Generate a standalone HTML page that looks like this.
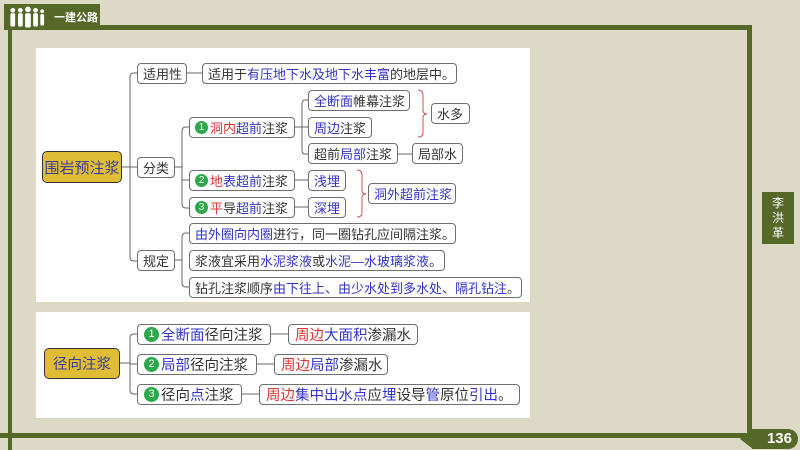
<!DOCTYPE html>
<html><head><meta charset="utf-8"><style>
*{margin:0;padding:0;box-sizing:border-box}
body{width:800px;height:450px;background:#dcd9c7;position:relative;overflow:hidden;font-family:"Liberation Sans","Noto Sans CJK SC",sans-serif}
.g{position:absolute;background:#566828}
.panel{position:absolute;background:#fff}
.n{position:absolute;border:1px solid #6f6f6f;border-radius:4px;background:#fff;font-size:13px;color:#333;display:flex;align-items:center;padding:0 5px;white-space:nowrap;letter-spacing:0}
.p2 .n{font-size:14.5px;padding:0 6px}
.root{background:#e0bd35;border:1.5px solid #333;border-radius:5px;color:#3b3c9a;font-size:15px;justify-content:center}
.b{color:#3333cc}.r{color:#e03333}
.c{display:inline-block;width:13px;height:13px;border-radius:50%;background:#2aa84a;color:#fff;font-size:10px;line-height:13px;text-align:center;margin-right:2px}
.p2 .c{width:15px;height:15px;line-height:15px;font-size:11px}
svg{position:absolute;left:0;top:0}
</style></head><body>
<div class="g" style="left:100px;top:25px;width:652px;height:5px"></div>
<div class="g" style="left:747px;top:25px;width:5px;height:412px"></div>
<div class="g" style="left:0;top:433px;width:752px;height:5px"></div>
<div class="g" style="left:8px;top:30px;width:4px;height:420px"></div>
<div class="g" style="left:4px;top:4px;width:96px;height:26px;display:flex;align-items:center;padding-left:4px;white-space:nowrap">
<svg width="38" height="22" viewBox="0 0 40 22" style="position:static;flex:none"><g fill="#fff"><circle cx="5" cy="4" r="2.5"/><rect x="2.5" y="7" width="5" height="14" rx="1.5"/><circle cx="13" cy="4" r="2.5"/><rect x="10.5" y="7" width="5" height="14" rx="1.5"/><circle cx="21" cy="3" r="3"/><rect x="18" y="7" width="6" height="15" rx="1.5"/><circle cx="29" cy="4" r="2.5"/><rect x="26.5" y="7" width="5" height="14" rx="1.5"/><circle cx="36" cy="5" r="2"/><rect x="34" y="8" width="4" height="12" rx="1.5"/></g></svg>
<span style="color:#fff;font-size:11px;margin-left:8px;font-weight:bold;white-space:nowrap">一建公路</span></div>
<div class="g" style="left:762px;top:192px;width:32px;height:52px;color:#fff;font-size:12px;line-height:15px;text-align:center;padding-top:4px">李<br>洪<br>革</div>
<div class="g" style="left:752px;top:429px;width:46px;height:20px;border-radius:0 10px 10px 0;color:#fff;font-size:15px;font-weight:bold;text-align:right;padding-right:6px;line-height:20px">136</div>
<div class="g" style="left:740px;top:429px;width:13px;height:20px;clip-path:polygon(100% 0,100% 100%,0 50%)"></div>

<div class="panel" style="left:36px;top:48px;width:494px;height:254px"></div>
<div class="panel" style="left:36px;top:312px;width:494px;height:106px"></div>

<svg width="800" height="450" fill="none" stroke="#666" stroke-width="1">
<path d="M122 167H130M137 73H134Q130 73 130 77V257Q130 261 134 261H137M130 167H137"/>
<path d="M187 73H202"/>
<path d="M175 167H182M189 127H186Q182 127 182 131V204Q182 208 186 208H189M182 180H189"/>
<path d="M295 127H302M308 100H305Q302 100 302 104V150Q302 154 305 154H308M302 127H308"/>
<path d="M398 154H412"/>
<path d="M295 180H308M295 207H308"/>
<path d="M175 260H182M189 233H186Q182 233 182 237V283Q182 287 186 287H189"/>
<path d="M120 363H130M137 334H134Q130 334 130 338V390Q130 394 134 394H137M130 364H137"/>
<path d="M271 334H288M257 364H274M242 394H259"/>
<path stroke="#d05050" d="M418 90Q423 90 423 95V110Q423 114 427 114Q423 114 423 118V133Q423 137 418 137"/>
<path stroke="#d05050" d="M357 170Q362 170 362 175V190Q362 194 366 194Q362 194 362 198V213Q362 217 357 217"/>
</svg>

<div class="n root" style="left:42px;top:151px;width:80px;height:32px">围岩预注浆</div>
<div class="n" style="left:137px;top:63px;height:21px;width:50px">适用性</div>
<div class="n" style="left:137px;top:157px;height:21px;width:38px">分类</div>
<div class="n" style="left:137px;top:250px;height:21px;width:38px">规定</div>
<div class="n" style="left:202px;top:63px;height:21px;width:255px">适用于<span class="b">有压地下水及地下水丰富</span>的地层中。</div>
<div class="n" style="left:189px;top:117px;height:21px;width:106px"><span class="c">1</span><span class="r">洞内</span><span class="b">超前</span>注浆</div>
<div class="n" style="left:189px;top:170px;height:21px;width:106px"><span class="c">2</span><span class="r">地</span><span class="b">表超前</span>注浆</div>
<div class="n" style="left:189px;top:197px;height:21px;width:106px"><span class="c">3</span><span class="r">平</span>导<span class="b">超前</span>注浆</div>
<div class="n" style="left:308px;top:90px;height:21px;width:102px"><span class="b">全断面</span>帷幕注浆</div>
<div class="n" style="left:308px;top:117px;height:21px;width:64px"><span class="b">周边</span>注浆</div>
<div class="n" style="left:308px;top:143px;height:21px;width:90px">超前<span class="b">局部</span>注浆</div>
<div class="n" style="left:412px;top:143px;height:21px;width:51px">局部水</div>
<div class="n" style="left:431px;top:103px;height:21px;width:39px">水多</div>
<div class="n" style="left:308px;top:170px;height:21px;width:38px"><span class="b">浅埋</span></div>
<div class="n" style="left:308px;top:197px;height:21px;width:38px"><span class="b">深埋</span></div>
<div class="n" style="left:368px;top:183px;height:21px;width:88px"><span class="b">洞外超前注浆</span></div>
<div class="n" style="left:189px;top:223px;height:21px;width:267px"><span class="b">由外圈向内圈</span>进行，同一圈钻孔应间隔注浆。</div>
<div class="n" style="left:189px;top:250px;height:21px;width:256px">浆液宜采用<span class="b">水泥浆液</span>或<span class="b">水泥—水玻璃浆液</span>。</div>
<div class="n" style="left:189px;top:277px;height:21px;width:333px">钻孔注浆顺序<span class="b">由下往上、由少水处到多水处、隔孔钻注</span>。</div>

<div class="p2">
<div class="n root" style="left:44px;top:348px;width:76px;height:31px;padding:0">径向注浆</div>
<div class="n" style="left:137px;top:324px;height:21px;width:134px"><span class="c">1</span><span class="b">全断面</span>径向注浆</div>
<div class="n" style="left:137px;top:354px;height:21px;width:120px"><span class="c">2</span><span class="b">局部</span>径向注浆</div>
<div class="n" style="left:137px;top:384px;height:21px;width:105px"><span class="c">3</span>径向<span class="b">点</span>注浆</div>
<div class="n" style="left:288px;top:324px;height:21px;width:130px"><span class="r">周边</span><span class="b">大面积</span>渗漏水</div>
<div class="n" style="left:274px;top:354px;height:21px;width:114px"><span class="r">周边</span><span class="b">局部</span>渗漏水</div>
<div class="n" style="left:259px;top:384px;height:21px;width:261px"><span class="r">周边</span><span class="b">集中出水点</span>应<span class="b">埋</span>设导<span class="b">管</span>原位<span class="b">引出</span>。</div>
</div>
</body></html>
